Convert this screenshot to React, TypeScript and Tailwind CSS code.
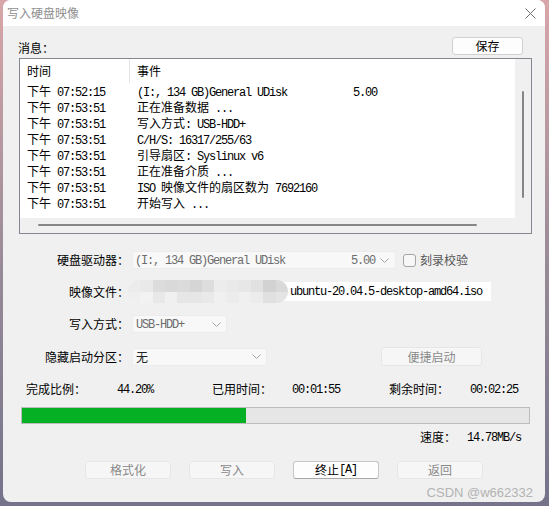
import React from 'react';

const asciiRun = /^[\x20-\x7e]+$/;

// SimSun-style text: half-width ascii at 6px per char, CJK at 12px
function Sim({ text }: { text: string }) {
  const parts = text.split(/([\x20-\x7e]+)/).filter(Boolean);
  return (
    <>
      {parts.map((p, i) =>
        asciiRun.test(p) ? (
          <span key={i} className="font-['Liberation_Mono',monospace] text-[12px] tracking-[-1.2px] whitespace-pre">
            {p}
          </span>
        ) : (
          <span key={i}>{p}</span>
        )
      )}
    </>
  );
}

const logs = [
  ['下午 07:52:15', '(I:, 134 GB)General UDisk           5.00'],
  ['下午 07:53:51', '正在准备数据 ...'],
  ['下午 07:53:51', '写入方式: USB-HDD+'],
  ['下午 07:53:51', 'C/H/S: 16317/255/63'],
  ['下午 07:53:51', '引导扇区: Syslinux v6'],
  ['下午 07:53:51', '正在准备介质 ...'],
  ['下午 07:53:51', 'ISO 映像文件的扇区数为 7692160'],
  ['下午 07:53:51', '开始写入 ...'],
];

const mosaicTop = ['#ececec', '#e9e9e9', '#dcdcdc', '#d9d9d9', '#dbdbdb', '#d5d5d5', '#dddddd', '#ececec', '#e9e9e9', '#e7e7e7', '#e1e1e1', '#d2d2d2', '#d9d9d9'];
const mosaicBottom = ['#efefef', '#f2f2f2', '#e8e8e8', '#f0f0f0', '#e6e6e6', '#e6e6e6', '#e9e9e9', '#f0f0f0', '#ececec', '#f0f0f0', '#ececec', '#e0e0e0', '#e4e4e4'];

function Chevron() {
  return (
    <svg width="9" height="5" viewBox="0 0 9 5" fill="none">
      <path d="M0.5 0.5 L4.5 4.5 L8.5 0.5" stroke="#a3a3a3" strokeWidth="1" />
    </svg>
  );
}

function Label({ children }: { children: React.ReactNode }) {
  return <div className="w-[126px] text-right leading-none">{children}</div>;
}

function Btn({ children, active }: { children: React.ReactNode; active?: boolean }) {
  return (
    <div
      className={
        active
          ? 'w-[86px] h-[18px] flex items-center justify-center rounded-[3px] bg-[#fdfdfd] border border-[#c6c6c6] border-b-[#a8a8a8] text-black leading-none'
          : 'w-[86px] h-[18px] flex items-center justify-center rounded-[3px] bg-[#f6f6f6] border border-[#e6e6e6] text-[#8a8a8a] leading-none'
      }
    >
      {children}
    </div>
  );
}

export default function App() {
  return (
    <div className="w-[549px] h-[506px] overflow-hidden bg-linear-to-b from-[#d8a6a9] via-[#9a8c98] to-[#74738a] pl-[3px]">
      <div className="relative w-[542px] h-[502px] rounded-[8px] overflow-hidden bg-[#f0f0f0] flex flex-col font-['Noto_Sans_CJK_SC',sans-serif] text-[12px] text-black">
        {/* title bar */}
        <div className="h-[26px] shrink-0 bg-white flex items-center justify-between pl-[4px] pr-[9px]">
          <span className="text-[12px] text-[#8f8f8f] leading-none">写入硬盘映像</span>
          <svg width="11" height="11" viewBox="0 0 11 11" fill="none">
            <path d="M0.5 0.5 L10.5 10.5 M10.5 0.5 L0.5 10.5" stroke="#6f6f6f" strokeWidth="1" />
          </svg>
        </div>

        {/* messages header */}
        <div className="mt-[11px] h-[18px] flex items-center justify-between pl-[15px] pr-[22px]">
          <span className="leading-none pt-[3px]">消息：</span>
          <div className="w-[71px] h-[18px] flex items-center justify-center rounded-[3px] bg-[#fdfdfd] border border-[#d0d0d0] leading-none">
            保存
          </div>
        </div>

        {/* log list */}
        <div className="mt-[3px] ml-[16px] w-[513px] h-[176px] border border-[#828790] grid grid-cols-[1fr_16px] grid-rows-[1fr_15px]">
          <div className="bg-white overflow-hidden">
            <div className="h-[24px] flex">
              <div className="w-[110px] pl-[7px] border-r border-[#e5e5e5] flex items-center leading-none">时间</div>
              <div className="pl-[7px] flex items-center leading-none">事件</div>
            </div>
            {logs.map(([t, e], i) => (
              <div key={i} className="h-[16px] flex items-center leading-[16px] whitespace-pre overflow-hidden">
                <div className="w-[117px] pl-[7px] h-[16px]">
                  <Sim text={t} />
                </div>
                <div className="h-[16px]">
                  <Sim text={e} />
                </div>
              </div>
            ))}
          </div>
          <div className="bg-[#f0f0f0] pl-[7px] pt-[32px]">
            <div className="w-[2px] h-[107px] bg-[#868686] rounded-full" />
          </div>
          <div className="bg-[#f0f0f0] pl-[18px] pt-[6px]">
            <div className="w-[439px] h-[2px] bg-[#868686] rounded-full" />
          </div>
          <div className="bg-[#f0f0f0]" />
        </div>

        {/* drive */}
        <div className="mt-[17px] h-[18px] flex items-center">
          <Label>硬盘驱动器：</Label>
          <div className="ml-[3px] w-[264px] h-[18px] flex items-center justify-between pl-[2px] pr-[6px] bg-[#f8f8f8] border border-[#ececec] rounded-[3px] text-[#6d6d6d] leading-none whitespace-pre">
            <span>
              <Sim text="(I:, 134 GB)General UDisk           5.00" />
            </span>
            <Chevron />
          </div>
          <div className="ml-[7px] w-[13px] h-[13px] rounded-[3px] border border-[#a5a5a5] bg-[#f7f7f7]" />
          <span className="ml-[4px] text-[#555] leading-none">刻录校验</span>
        </div>

        {/* image file */}
        <div className="mt-[13px] h-[19px] flex items-center">
          <Label>映像文件：</Label>
          <div className="relative ml-[3px] w-[359px] h-[19px] bg-white flex items-center pl-[158px] leading-none whitespace-pre">
            <Sim text="ubuntu-20.04.5-desktop-amd64.iso" />
            <div className="absolute left-[-4px] top-[-2px] w-[160px] h-[23px] rounded-full overflow-hidden flex flex-col">
              <div className="flex-1 flex">
                {mosaicTop.map((c, i) => (
                  <div key={i} className="flex-1" style={{ background: c }} />
                ))}
              </div>
              <div className="flex-1 flex">
                {mosaicBottom.map((c, i) => (
                  <div key={i} className="flex-1" style={{ background: c }} />
                ))}
              </div>
            </div>
          </div>
        </div>

        {/* write mode */}
        <div className="mt-[14px] h-[18px] flex items-center">
          <Label>写入方式：</Label>
          <div className="ml-[3px] w-[95px] h-[18px] flex items-center justify-between pl-[3px] pr-[5px] bg-[#f8f8f8] border border-[#ececec] rounded-[3px] text-[#6d6d6d] leading-none">
            <span>
              <Sim text="USB-HDD+" />
            </span>
            <Chevron />
          </div>
        </div>

        {/* hidden partition */}
        <div className="mt-[14px] h-[19px] flex items-center">
          <Label>隐藏启动分区：</Label>
          <div className="ml-[3px] w-[135px] h-[18px] flex items-center justify-between pl-[3px] pr-[5px] bg-[#f8f8f8] border border-[#ececec] rounded-[3px] text-[#222] leading-none">
            <span>无</span>
            <Chevron />
          </div>
          <div className="ml-[114px] w-[101px] h-[19px] flex items-center justify-center rounded-[3px] bg-[#f6f6f6] border border-[#e6e6e6] text-[#8a8a8a] leading-none">
            便捷启动
          </div>
        </div>

        {/* stats */}
        <div className="mt-[15px] h-[16px] flex items-center pl-[23px] leading-none whitespace-pre">
          <span className="w-[91px]">完成比例：</span>
          <span className="w-[95px]">
            <Sim text="44.20%" />
          </span>
          <span className="w-[80px]">已用时间：</span>
          <span className="w-[97px]">
            <Sim text="00:01:55" />
          </span>
          <span className="w-[81px]">剩余时间：</span>
          <span>
            <Sim text="00:02:25" />
          </span>
        </div>

        {/* progress */}
        <div className="mt-[10px] ml-[18px] w-[509px] h-[17px] border border-[#bcbcbc] bg-[#e6e6e6]">
          <div className="h-full bg-[#06b025]" style={{ width: '44.2%' }} />
        </div>

        {/* speed */}
        <div className="mt-[5px] h-[16px] flex items-center pl-[417px] leading-none whitespace-pre">
          <span className="w-[47px]">速度：</span>
          <span>
            <Sim text="14.78MB/s" />
          </span>
        </div>

        {/* buttons */}
        <div className="mt-[16px] h-[18px] flex pl-[82px] gap-[18px]">
          <Btn>格式化</Btn>
          <Btn>写入</Btn>
          <Btn active>
            <Sim text="终止[A]" />
          </Btn>
          <Btn>返回</Btn>
        </div>

        <span className="absolute right-[12px] bottom-[3px] font-['Liberation_Sans',sans-serif] text-[13px] text-[#b3b3b3] leading-none">
          CSDN @w662332
        </span>
      </div>
    </div>
  );
}
